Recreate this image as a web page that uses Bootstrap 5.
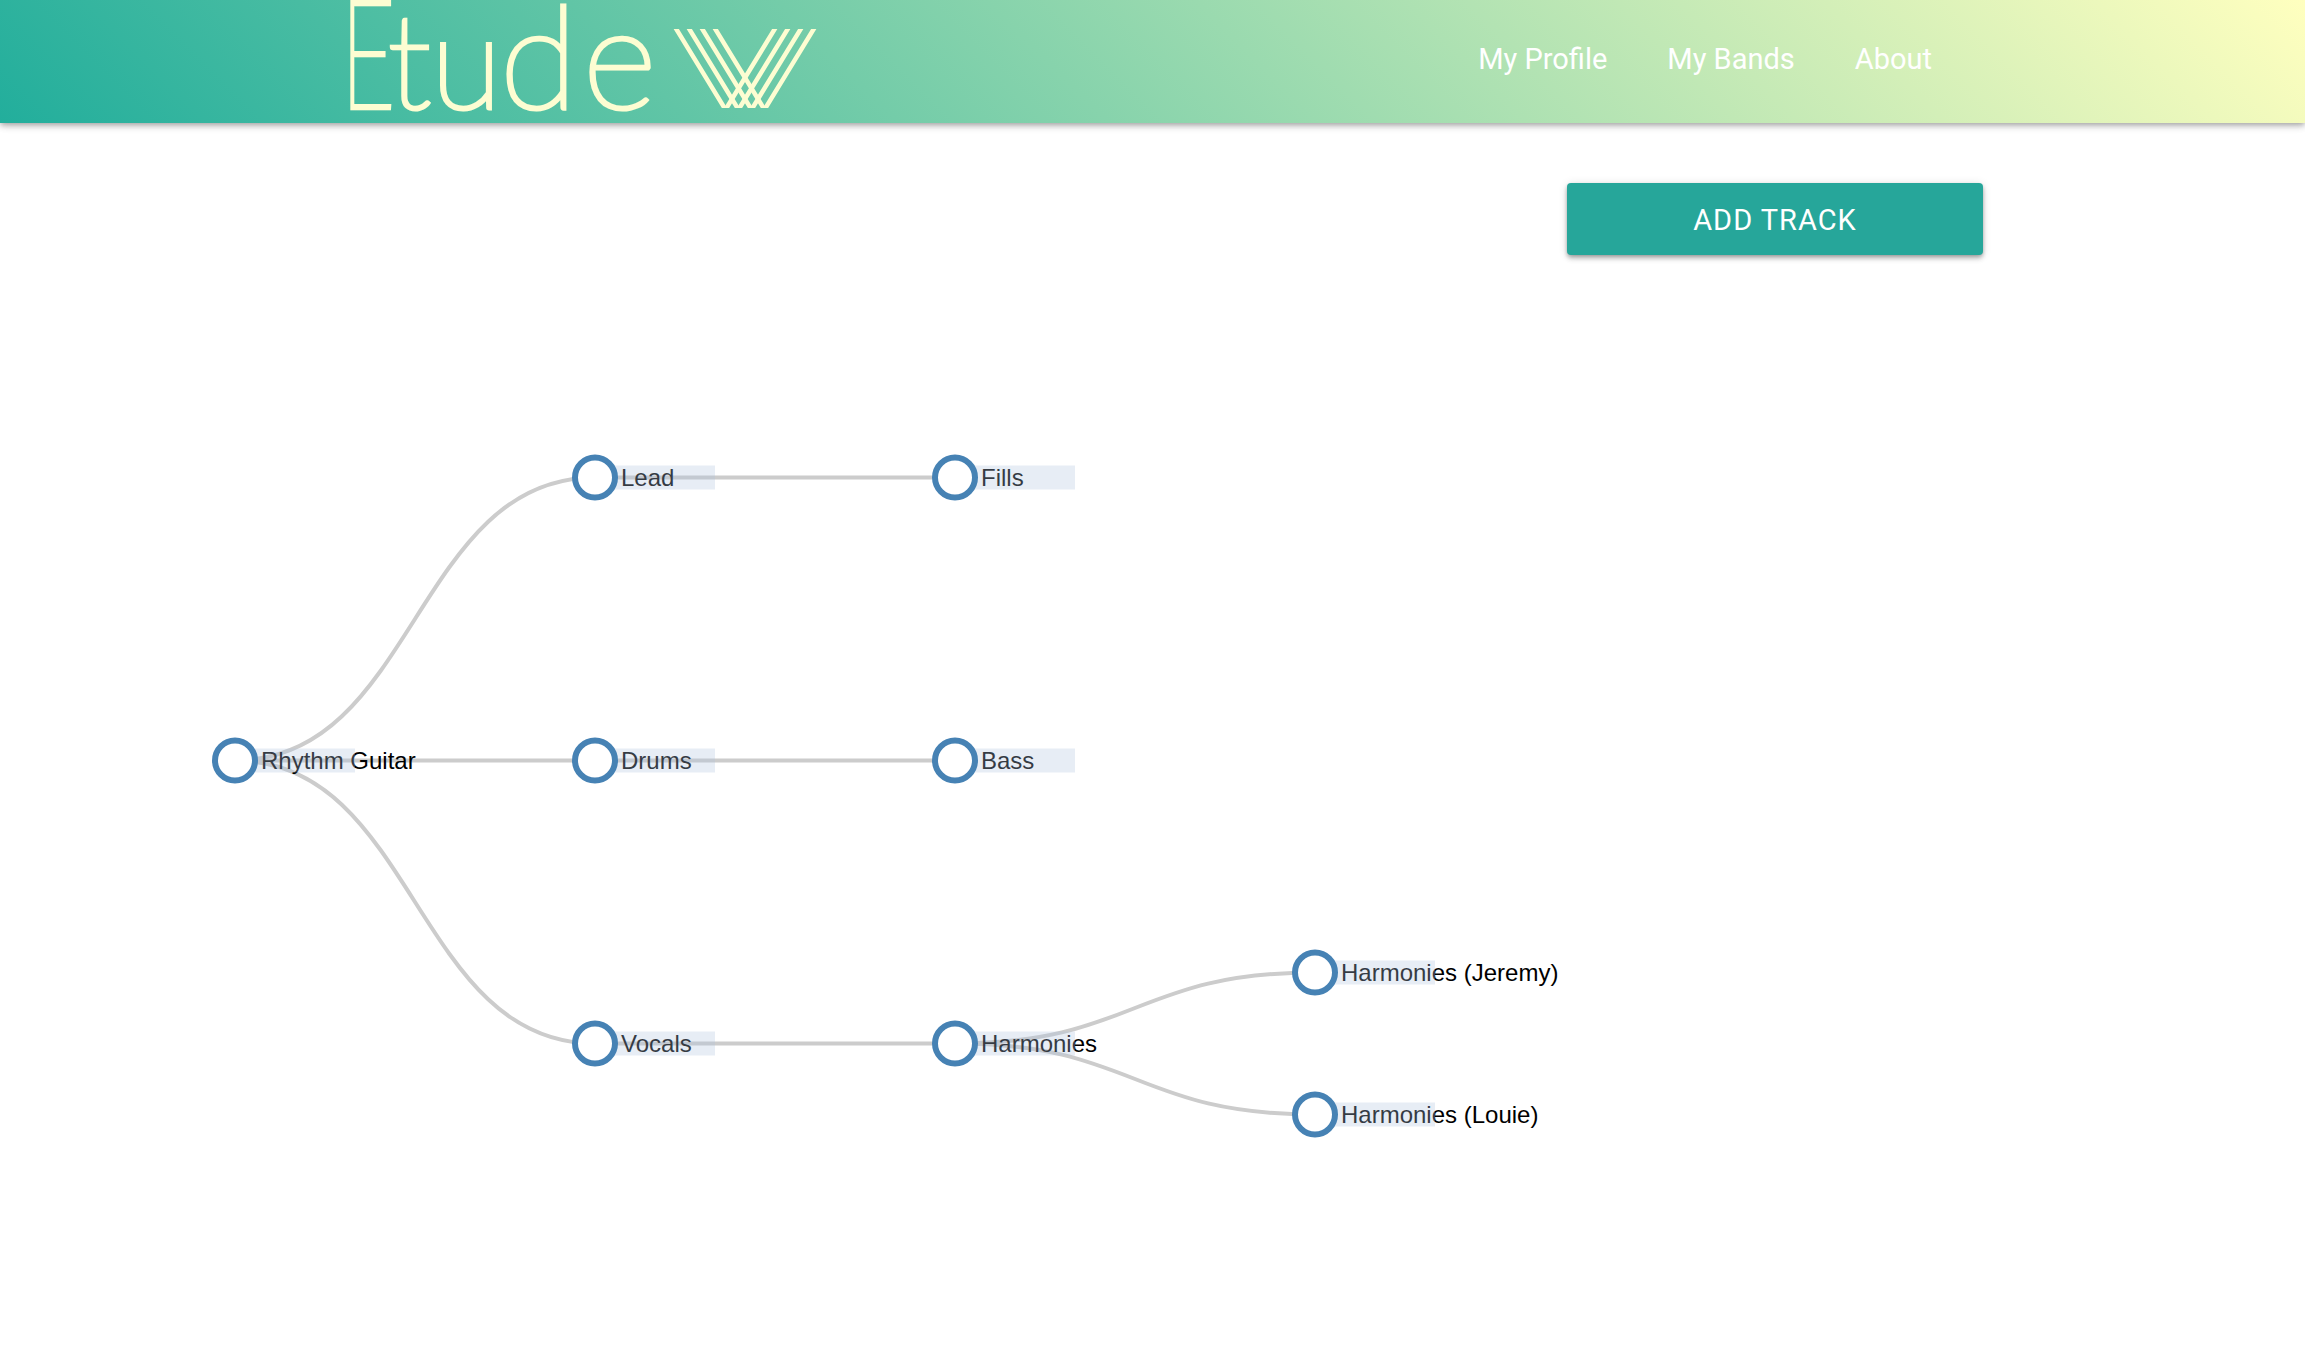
<!DOCTYPE html>
<html>
<head>
  <title>Etude</title>
  <link rel="stylesheet" href="https://cdn.jsdelivr.net/npm/bootstrap@5.3.0/dist/css/bootstrap.min.css">
  <style>
    body { background: #fff; font-family: Roboto, sans-serif; overflow: hidden; }
    .app-header { height: 123px; background: linear-gradient(45deg, #22ae9c 0%, #ffffbf 100%); box-shadow: 0 4px 6px 0 rgba(0,0,0,.12), 0 1px 10px 0 rgba(0,0,0,.12), 0 2px 5px -1px rgba(0,0,0,.22); padding: 0; }
    .logo-box { margin-left: 340px; height: 123px; display: block; }
    .brand-text { font-family: Lato, sans-serif; font-weight: 100; font-size: 130px; fill: #fdfdd2; stroke: #fdfdd2; stroke-width: 4.5px; }
    .brand-cap { font-size: 150px; }
    .brand-wide { font-size: 142px; }
    .nav-links { margin-right: 373px; gap: 60px; }
    .nav-links a { color: #fff; font-size: 29px; text-decoration: none; line-height: 1; padding-bottom: 4px; }
    .add-row { padding: 60px 322px 0 0; }
    .add-btn { width: 416px; height: 72px; padding-top: 9px; background: #26a69a; color: #fff; border: 0; border-radius: 4px; font-size: 29px; letter-spacing: 1px; text-transform: uppercase; box-shadow: 0 4px 5px 0 rgba(0,0,0,.14), 0 1px 10px 0 rgba(0,0,0,.12), 0 2px 4px -1px rgba(0,0,0,.3); }
    .tree-chart { display: block; }
    .tree-chart path { fill: none; stroke: #ccc; stroke-width: 4px; }
    .tree-chart text { font-family: "Liberation Sans", Arial, sans-serif; font-size: 24px; fill: #000; }
    .tree-chart rect { fill: lightsteelblue; opacity: .3; }
    .tree-chart circle { fill: #fff; stroke: steelblue; stroke-width: 6px; }
  </style>
</head>
<body>
<nav class="navbar app-header d-flex justify-content-between align-items-center flex-nowrap">
  <svg class="logo-box" width="490" height="123" viewBox="340 0 490 123">
    <text class="brand-text" y="108"><tspan class="brand-cap" x="341" textLength="54" lengthAdjust="spacingAndGlyphs">E</tspan><tspan x="388">t</tspan><tspan x="431">u</tspan><tspan class="brand-wide" x="500">d</tspan><tspan class="brand-wide" x="583">e</tspan></text>
    <clipPath id="markClip"><rect x="660" y="29" width="170" height="79"/></clipPath>
    <g fill="none" stroke="#fdfdd2" stroke-width="4.5" clip-path="url(#markClip)">
      <path d="M672 22L730 117M685 22L743 117M698 22L756 117M711 22L769 117"/>
      <path d="M818 22L760 117M805 22L747 117M792 22L734 117M779 22L721 117"/>
    </g>
  </svg>
  <div class="nav-links d-flex align-items-center">
    <a href="#">My Profile</a>
    <a href="#">My Bands</a>
    <a href="#">About</a>
  </div>
</nav>

<div class="add-row d-flex justify-content-end">
  <button class="add-btn btn">Add Track</button>
</div>

<svg class="tree-chart" id="tree" width="2305" height="1107"></svg>

<script>
// node positions in px, y is relative to the page
const nodes = {
  rhythm: { x: 235, y: 760.5, name: "Rhythm Guitar" },
  lead: { x: 595, y: 477.5, name: "Lead", parent: "rhythm" },
  drums: { x: 595, y: 760.5, name: "Drums", parent: "rhythm" },
  vocals: { x: 595, y: 1043.5, name: "Vocals", parent: "rhythm" },
  fills: { x: 955, y: 477.5, name: "Fills", parent: "lead" },
  bass: { x: 955, y: 760.5, name: "Bass", parent: "drums" },
  harm: { x: 955, y: 1043.5, name: "Harmonies", parent: "vocals" },
  jeremy: { x: 1315, y: 972.5, name: "Harmonies (Jeremy)", parent: "harm" },
  louie: { x: 1315, y: 1114.5, name: "Harmonies (Louie)", parent: "harm" }
};
const NS = "http://www.w3.org/2000/svg";
const svg = document.getElementById("tree");
const TOP = 255;

function add(tag, attrs, txt) {
  const el = document.createElementNS(NS, tag);
  for (const k in attrs) el.setAttribute(k, attrs[k]);
  if (txt) el.textContent = txt;
  svg.appendChild(el);
}

Object.values(nodes).forEach(n => {
  if (!n.parent) return;
  const p = nodes[n.parent], mx = (p.x + n.x) / 2;
  add("path", { d: `M${p.x} ${p.y - TOP}C${mx} ${p.y - TOP} ${mx} ${n.y - TOP} ${n.x} ${n.y - TOP}` });
});
Object.values(nodes).forEach(n => {
  add("text", { x: n.x + 26, y: n.y - TOP + 8 }, n.name);
  add("rect", { x: n.x, y: n.y - TOP - 12, width: 120, height: 24 });
  add("circle", { cx: n.x, cy: n.y - TOP, r: 20 });
});
</script>
<script src="https://cdn.jsdelivr.net/npm/bootstrap@5.3.0/dist/js/bootstrap.bundle.min.js"></script>
</body>
</html>
